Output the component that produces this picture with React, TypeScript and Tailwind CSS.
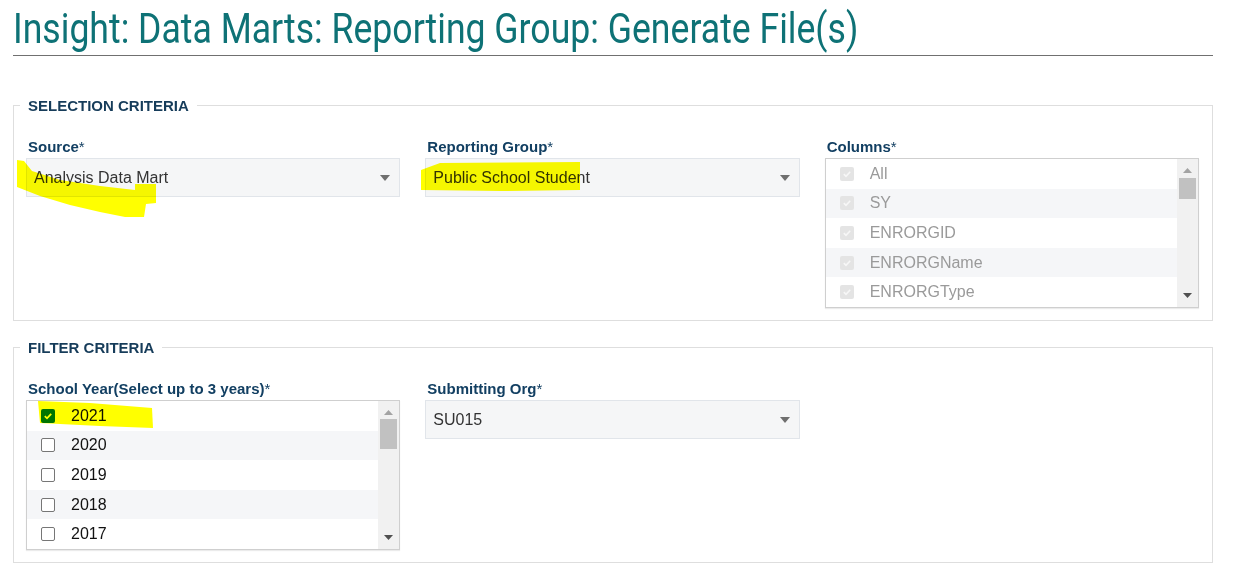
import React from "react"

const FONT = { fontFamily: '"Liberation Sans", Arial, sans-serif' }

const Caret = () => (
  <svg width="10" height="6" viewBox="0 0 10 6" className="shrink-0">
    <path d="M0 0 L10 0 L5 6 Z" fill="#6f6f6f" />
  </svg>
)

const Label = ({ text }: { text: string }) => (
  <div className="ml-[2px] text-[15px] leading-[17px] font-bold text-[#123f62] mb-[3px]">
    {text}
    <span className="font-normal">*</span>
  </div>
)

const Select = ({ value }: { value: string }) => (
  <div className="h-[39px] bg-[#f5f6f7] border border-[#e1e5ea] flex items-center pl-[7px] pr-[9px] text-[16px] text-[#333]">
    <span className="flex-1">{value}</span>
    <Caret />
  </div>
)

const Box = ({ checked, disabled }: { checked: boolean; disabled?: boolean }) => {
  if (disabled)
    return (
      <div className="w-[14px] h-[14px] rounded-[2px] bg-[#e4e4e4] flex items-center justify-center shrink-0">
        <svg width="10" height="10" viewBox="0 0 10 10">
          <path d="M1.8 5.2 L4 7.3 L8.2 2.8" stroke="#f7f7f7" strokeWidth="1.6" fill="none" />
        </svg>
      </div>
    )
  if (checked)
    return (
      <div className="w-[14px] h-[14px] rounded-[2px] bg-[#0075ff] flex items-center justify-center shrink-0">
        <svg width="10" height="10" viewBox="0 0 10 10">
          <path d="M1.8 5.2 L4 7.3 L8.2 2.8" stroke="#fff" strokeWidth="1.8" fill="none" />
        </svg>
      </div>
    )
  return <div className="w-[14px] h-[14px] rounded-[2px] border border-[#767676] bg-white shrink-0" />
}

interface ListProps {
  items: string[]
  checked?: string[]
  disabled?: boolean
  thumbTop: number
  thumbHeight: number
}

const CheckList = ({ items, checked = [], disabled, thumbTop, thumbHeight }: ListProps) => (
  <div className="h-[150px] border border-[#cfcfcf] bg-white flex shadow-[0_1px_1px_rgba(0,0,0,0.08)]">
    <div className="flex-1 flex flex-col">
      {items.map((item, i) => (
        <div
          key={item}
          className={`h-[29.6px] flex items-center pl-[14px] text-[16px] ${i % 2 === 1 ? "bg-[#f5f6f8]" : ""} ${
            disabled ? "text-[#9a9a9a]" : "text-[#111]"
          }`}
        >
          <Box checked={disabled || checked.includes(item)} disabled={disabled} />
          <span className="ml-[16px]">{item}</span>
        </div>
      ))}
    </div>
    {/* fake scrollbar */}
    <div className="w-[21px] bg-[#f1f1f1] flex flex-col items-center">
      <svg width="9" height="5" viewBox="0 0 9 5" className="mt-[9px]">
        <path d="M0 5 L9 5 L4.5 0 Z" fill="#a3a3a3" />
      </svg>
      <div className="w-[17px] bg-[#c1c1c1]" style={{ marginTop: thumbTop, height: thumbHeight }} />
      <div className="flex-1" />
      <svg width="9" height="5" viewBox="0 0 9 5" className="mb-[9px]">
        <path d="M0 0 L9 0 L4.5 5 Z" fill="#505050" />
      </svg>
    </div>
  </div>
)

const Section = ({ title, children }: { title: string; children: React.ReactNode }) => (
  <fieldset className="border border-[#dedede] pl-[6px] pr-[13px] pb-[12px] min-w-0">
    <legend className="px-[8px] text-[15px] leading-[17px] font-bold text-[#163c5a]">{title}</legend>
    <div className="pl-[6px] pt-[24px] grid grid-cols-3 gap-x-[25px]">{children}</div>
  </fieldset>
)

export default function App() {
  return (
    <div className="relative w-[1248px] h-[580px] bg-white overflow-hidden" style={FONT}>
      <div className="ml-[13px] w-[1200px]">
        <div className="pt-[7px] pb-[5px] border-b border-[#707070]">
          <h1
            className="text-[43px] leading-none text-[#0e7276] inline-block origin-left scale-x-[0.828] whitespace-nowrap"
            style={{ fontFamily: "Roboto, sans-serif" }}
          >
            Insight: Data Marts: Reporting Group: Generate File(s)
          </h1>
        </div>

        <div className="mt-[41px]">
          <Section title="SELECTION CRITERIA">
            <div>
              <Label text="Source" />
              <Select value="Analysis Data Mart" />
            </div>
            <div>
              <Label text="Reporting Group" />
              <Select value="Public School Student" />
            </div>
            <div>
              <Label text="Columns" />
              <CheckList
                items={["All", "SY", "ENRORGID", "ENRORGName", "ENRORGType"]}
                disabled
                thumbTop={5}
                thumbHeight={21}
              />
            </div>
          </Section>
        </div>

        <div className="mt-[18px]">
          <Section title="FILTER CRITERIA">
            <div>
              <Label text="School Year(Select up to 3 years)" />
              <CheckList
                items={["2021", "2020", "2019", "2018", "2017"]}
                checked={["2021"]}
                thumbTop={4}
                thumbHeight={30}
              />
            </div>
            <div>
              <Label text="Submitting Org" />
              <Select value="SU015" />
            </div>
            <div />
          </Section>
        </div>
      </div>

      {/* highlighter marks drawn over the screenshot */}
      <svg className="absolute inset-0 pointer-events-none mix-blend-multiply" width="1248" height="580">
        <polygon
          fill="#ffff00"
          points="17,160 24,161 32,171 60,180 100,186 135,190 135,184 156,184 156,203 146,204 144,217 125,217 100,212 70,205 40,196 17,187"
        />
        <polygon fill="#ffff00" points="421,170 440,163 580,162 580,190 500,191 421,190" />
        <polygon fill="#ffff00" points="38,401 90,403 152,408 153,428 100,426 40,423" />
      </svg>
    </div>
  )
}
